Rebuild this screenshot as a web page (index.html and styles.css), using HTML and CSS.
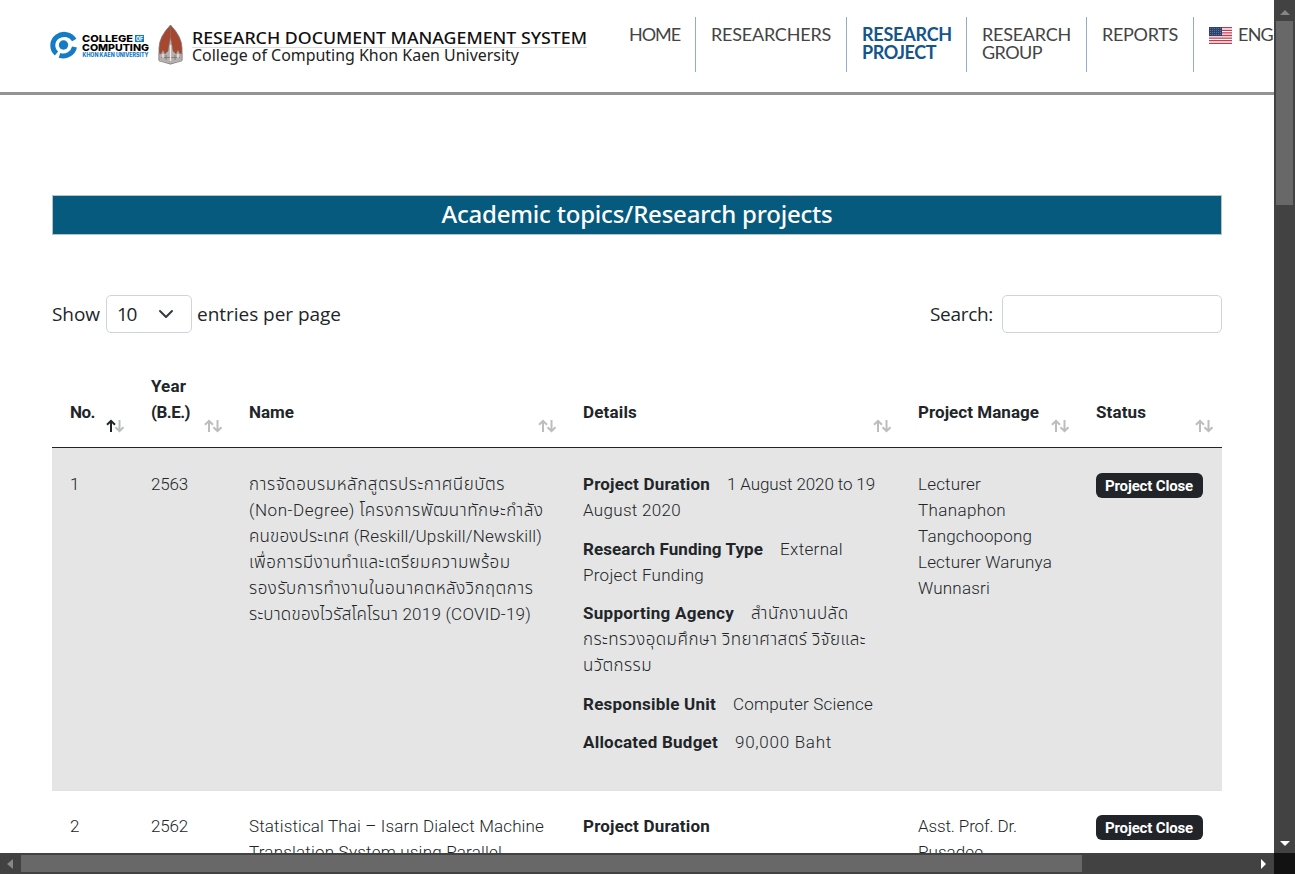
FILE: index.html
```html
<!DOCTYPE html>
<html lang="en">
<head>
<meta charset="utf-8">
<title>Research Project</title>
<link rel="stylesheet" href="styles.css">
</head>
<body>
<svg class="defs" width="0" height="0"><defs>
<g id="up" fill="none" stroke-width="2"><path d="M5 13V1.8M1 5.8L5 1.8L9 5.8"/></g>
<g id="down" fill="none" stroke-width="2"><path d="M13.500 1V12.200M9.500 8.200L13.500 12.200L17.500 8.200"/></g>
</defs></svg>
<div class="window">
<div class="page">
<header class="header">
  <svg class="brand" width="550" height="50" viewBox="44 20 550 50">
    <path d="M56.500 53.500A11.500 11 0 1 1 74.300 40" fill="none" stroke="#147bc4" stroke-width="5"/>
    <path d="M74.500 47A11.500 11 0 0 1 59.500 55.300" fill="none" stroke="#147bc4" stroke-width="5"/>
    <circle cx="63.500" cy="45" r="4.700" fill="#147bc4"/>
    <g class="logo-text">
      <text x="82" y="41.500" textLength="51" lengthAdjust="spacingAndGlyphs" font-size="9.500">COLLEGE</text>
      <text x="82" y="50.500" textLength="67" lengthAdjust="spacingAndGlyphs" font-size="9.500">COMPUTING</text>
      <rect x="135" y="35" width="9" height="7" fill="#147bc4"/>
      <text x="136" y="41" textLength="7" lengthAdjust="spacingAndGlyphs" font-size="6" fill="#fff">OF</text>
      <text x="82.500" y="56.500" textLength="66" lengthAdjust="spacingAndGlyphs" font-size="5.500" fill="#147bc4">KHON KAEN UNIVERSITY</text>
    </g>
    <path d="M170.500 25Q182 37 182 48V60L170.500 64L159 60V48Q159 37 170.500 25Z" fill="#a8472f" stroke="#777" stroke-width=".8"/>
    <path d="M159 61V53L161 54L163 50L165 54L168 51L169 45L170.500 37L172 45L173 51L176 54L178 50L180 54L182 53V61L170.500 64Z" fill="#b5b0ad" stroke="#77706c" stroke-width=".5"/>
    <path d="M170.500 27V38M166 55V60M175 55V60M161 57.500H180" stroke="#7c706b" stroke-width=".8"/>
    <path d="M170.500 45V61M163 54V58M178 54V58" stroke="#eee" stroke-width="1.300"/>
    <text class="system" x="192" y="44" textLength="395" lengthAdjust="spacingAndGlyphs">RESEARCH DOCUMENT MANAGEMENT SYSTEM</text>
    <path d="M192 47.500H587" stroke="#ddd"/>
    <text class="college" x="192" y="61" textLength="327" lengthAdjust="spacingAndGlyphs">College of Computing Khon Kaen University</text>
  </svg>
  <nav class="nav">
    <a><span data-w="51">HOME</span></a>
    <a><span data-w="120">RESEARCHERS</span></a>
    <a class="active"><span data-w="90">RESEARCH</span><span data-w="74">PROJECT</span></a>
    <a><span data-w="89">RESEARCH</span><span data-w="60">GROUP</span></a>
    <a><span data-w="76">REPORTS</span></a>
    <a class="language">
      <svg width="23" height="17" viewBox="0 0 23 17"><rect width="23" height="17" fill="#fff"/><path d="M0 .7H23M0 3.300H23M0 5.900H23M0 8.500H23M0 11.100H23M0 13.700H23M0 16.300H23" stroke="#c43a4c" stroke-width="1.300"/><rect width="13" height="9" fill="#2e4272"/><path d="M1 1.500H12M1 3.500H12M1 5.500H12M1 7.500H12" stroke="#7485a8" stroke-width=".7" stroke-dasharray="1 1"/></svg>
      <span data-w="35">ENG</span>
    </a>
  </nav>
</header>
<main class="content">
  <h1 class="title"><span data-w="391">Academic topics/Research projects</span></h1>
  <div class="tools">
    <label class="length"><span data-w="48">Show</span><span class="select"><span data-w="19">10</span><svg width="16" height="16" viewBox="0 0 16 16"><path d="M2 5l6 6l6-6" fill="none" stroke="#343a40" stroke-width="2" stroke-linecap="round" stroke-linejoin="round"/></svg></span><span data-w="144">entries per page</span></label>
    <label class="search"><span data-w="63">Search:</span><input class="input" type="text"></label>
  </div>
  <div class="table">
    <div class="row head">
      <div><span data-w="25">No.</span><svg class="sort" width="19" height="14"><use href="#up" class="on"/><use href="#down"/></svg></div>
      <div><span data-w="35">Year</span><span data-w="39">(B.E.)</span><svg class="sort" width="19" height="14"><use href="#up"/><use href="#down"/></svg></div>
      <div><span data-w="45">Name</span><svg class="sort" width="19" height="14"><use href="#up"/><use href="#down"/></svg></div>
      <div><span data-w="54">Details</span><svg class="sort" width="19" height="14"><use href="#up"/><use href="#down"/></svg></div>
      <div><span data-w="121">Project Manage</span><svg class="sort" width="19" height="14"><use href="#up"/><use href="#down"/></svg></div>
      <div><span data-w="50">Status</span><svg class="sort" width="19" height="14"><use href="#up"/><use href="#down"/></svg></div>
    </div>
    <div class="row first">
      <div>1</div>
      <div><span data-w="37">2563</span></div>
      <div class="lines"><span data-w="256">การจัดอบรมหลักสูตรประกาศนียบัตร</span><span data-w="295">(Non-Degree) โครงการพัฒนาทักษะกำลัง</span><span data-w="293">คนของประเทศ (Reskill/Upskill/Newskill)</span><span data-w="262">เพื่อการมีงานทำและเตรียมความพร้อม</span><span data-w="285">รองรับการทำงานในอนาคตหลังวิกฤตการ</span><span data-w="282">ระบาดของไวรัสโคโรนา 2019 (COVID-19)</span></div>
      <div>
        <p><b data-w="127">Project Duration</b><span class="value" data-w="148">1 August 2020 to 19</span><br><span data-w="98">August 2020</span></p>
        <p><b data-w="180">Research Funding Type</b><span class="value" data-w="63">External</span><br><span data-w="121">Project Funding</span></p>
        <p><b data-w="151">Supporting Agency</b><span class="value" data-w="98">สำนักงานปลัด</span><br><span data-w="283">กระทรวงอุดมศึกษา วิทยาศาสตร์ วิจัยและ</span><br><span data-w="69">นวัตกรรม</span></p>
        <p><b data-w="133">Responsible Unit</b><span class="value" data-w="140">Computer Science</span></p>
        <p><b data-w="135">Allocated Budget</b><span class="value" data-w="97">90,000 Baht</span></p>
      </div>
      <div class="lines"><span data-w="63">Lecturer</span><span data-w="88">Thanaphon</span><span data-w="114">Tangchoopong</span><span data-w="134">Lecturer Warunya</span><span data-w="72">Wunnasri</span></div>
      <div><b class="badge"><span data-w="88">Project Close</span></b></div>
    </div>
    <div class="row">
      <div>2</div>
      <div><span data-w="37">2562</span></div>
      <div class="lines"><span data-w="295">Statistical Thai – Isarn Dialect Machine</span><span data-w="253">Translation System using Parallel</span></div>
      <div><p><b data-w="127">Project Duration</b></p></div>
      <div class="lines"><span data-w="99">Asst. Prof. Dr.</span><span data-w="65">Pusadee</span></div>
      <div><b class="badge"><span data-w="88">Project Close</span></b></div>
    </div>
  </div>
</main>
</div>
<div class="vbar"><i class="arrow up"></i><div class="thumb"></div><i class="arrow down"></i></div>
<div class="hbar"><i class="arrow left"></i><div class="thumb"></div><i class="arrow right"></i></div>
<div class="corner"></div>
</div>
<script src="fit.js"></script>
</body>
</html>
```
FILE: styles.css
```css
* { box-sizing: border-box; }
body { margin: 0; overflow: hidden; background: #fff; color: #212529; font: 300 17px/26px Roboto, "Noto Sans Thai", "Noto Sans", sans-serif; }
.defs { position: absolute; }
.window { display: grid; grid-template: 853px 21px / 1274px 21px; width: 1295px; height: 874px; overflow: hidden; }
.page { overflow: hidden; min-width: 0; }
[data-w] { display: inline-block; white-space: nowrap; }
.header { display: flex; height: 95px; border-bottom: 3px solid #949494; padding-left: 44px; }
.brand { flex: none; margin-top: 20px; }
.logo-text { font-family: Inter, sans-serif; font-weight: 800; }
.system { font: 500 16.5px "Noto Sans", sans-serif; fill: #111; }
.college { font: 400 16px "Noto Sans", sans-serif; fill: #222; }
.nav { display: flex; flex: none; margin: 17px 0 0 20px; height: 55px; font: 400 18px/18px Lato, sans-serif; color: #444; }
.nav a { display: flex; flex-direction: column; align-items: flex-start; flex: none; width: 120px; padding: 8px 0 0 15px; border-right: 1px solid #95adc3; }
.nav a:nth-child(1) { width: 82px; }
.nav a:nth-child(2) { width: 151px; }
.nav a:nth-child(5) { width: 107px; }
.nav .active { color: #14558a; font-weight: 700; }
.nav .language { flex-direction: row; gap: 6px; border: 0; }
.language svg { margin-top: 2px; flex: none; }
.content { padding: 100px 52px 0; }
.title { margin: 0; height: 40px; border: 1px solid #b9c2c6; background: #065a7e; color: #fff; text-align: center; font: 500 24px/36px "Noto Sans", sans-serif; }
.tools { display: flex; justify-content: space-between; height: 38px; margin-top: 60px; font: 400 19px/38px "Open Sans", sans-serif; }
.length, .search { display: flex; }
.select { display: flex; align-items: center; justify-content: space-between; width: 86px; height: 38px; margin: 0 5px 0 6px; padding: 0 17px 0 10px; border: 1px solid #ced4da; border-radius: 5px; }
.input { width: 220px; height: 38px; margin-left: 9px; border: 1px solid #ced4da; border-radius: 5px; background: #fff; }
.table { margin-top: 33px; }
.row { display: grid; grid-template-columns: 81px 98px 334px 335px 178px 144px; }
.row > div { padding: 22px 0 0 18px; min-width: 0; }
.head { height: 82px; border-bottom: 1px solid #212529; font-weight: 700; }
.head > div { display: flex; flex-direction: column; align-items: flex-start; justify-content: flex-end; position: relative; padding-bottom: 22px; }
.row.head > div { padding-top: 0; }
.sort { position: absolute; right: 8px; bottom: 14px; stroke: #bcbdbe; }
.on { stroke: #212529; }
.row.first { height: 343px; border-bottom: 1px solid #dee2e6; background: #e5e5e5; }
.row.first > div { padding-top: 23px; }
.lines { display: flex; flex-direction: column; align-items: flex-start; }
.row p { margin: 0 0 12.5px; white-space: nowrap; }
.row b { font-weight: 700; }
.value { margin-left: 17px; }
.badge { display: block; width: 107px; height: 25px; margin-top: 2px; padding-left: 9px; border-radius: 6px; background: #212529; color: #fff; font-size: 15px; line-height: 26px; }
.vbar, .hbar { display: flex; align-items: center; background: #424242; }
.vbar { flex-direction: column; padding: 10px 0 7px; }
.hbar { padding: 0 8px 0 7px; }
.thumb { background: #686868; }
.vbar .thumb { width: 17px; height: 184px; margin: 6px 0 auto; }
.hbar .thumb { width: 1061px; height: 17px; margin: 0 auto 0 8px; }
.arrow { border: 5px solid transparent; flex: none; }
.up { border-top: 0; border-bottom-color: #868686; }
.down { border-bottom: 0; border-top-color: #fff; }
.left { border-left: 0; border-right: 6px solid #868686; }
.right { border-right: 0; border-left-color: #fff; }
.corner { background: #121212; }
```
FILE: fit.js
```js
// Adjust tracking so each text run fills its assigned width.
document.querySelectorAll('[data-w]').forEach(function (el) {
  var count = Array.from(el.textContent.replace(/[\u0e31\u0e34-\u0e3a\u0e47-\u0e4e]/g, '')).length;
  var gap = (Number(el.dataset.w) - el.getBoundingClientRect().width) / count;
  el.style.letterSpacing = gap + 'px';
});
```
